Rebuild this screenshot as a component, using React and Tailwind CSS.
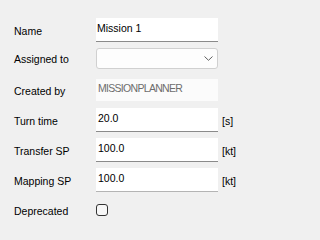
import React from 'react'

const font = { fontFamily: '"Liberation Sans", Arial, sans-serif' }

function Label({ children }) {
  return <div className="w-[82px] shrink-0 mt-[2px] text-black">{children}</div>
}

function TextBox({ value, border = 'border-b-[#8a8a8a]', pad = 'pl-[2px]' }) {
  return (
    <div
      className={`w-[122px] h-[24px] bg-white border-b ${border} flex items-center pb-[3px] ${pad} text-black`}
    >
      {value}
    </div>
  )
}

function Unit({ children }) {
  return <div className="ml-[4px] mt-[2px] text-black">{children}</div>
}

export default function App() {
  return (
    <div
      className="w-full min-w-[283px] h-screen min-h-[219px] bg-[#f0f0f0] overflow-hidden text-[10.5px] leading-none pl-[14px] pt-[18px] flex flex-col"
      style={font}
    >
      {/* Name */}
      <div className="flex items-center h-[24px]">
        <Label>Name</Label>
        <TextBox value="Mission 1" pad="pl-[1px]" />
      </div>

      {/* Assigned to */}
      <div className="flex items-center h-[21px] mt-[6px]">
        <Label>Assigned to</Label>
        <div className="w-[122px] h-[21px] bg-[#fdfdfd] border border-[#d0d0d0] rounded-[3px] flex items-center justify-end pr-[4px]">
          <svg width="9" height="5" viewBox="0 0 9 5" fill="none" stroke="#606060" strokeWidth="1">
            <path d="M0.5 0.5 L4.5 4.3 L8.5 0.5" />
          </svg>
        </div>
      </div>

      {/* Created by */}
      <div className="flex items-center h-[22px] mt-[10px]">
        <Label>Created by</Label>
        <div className="w-[122px] h-[22px] bg-[#fbfbfb] flex items-center pl-[2px] pb-[3px] text-[#6d6d6d] tracking-[-0.7px]">
          MISSIONPLANNER
        </div>
      </div>

      {/* Turn time */}
      <div className="flex items-center h-[24px] mt-[7px]">
        <Label>Turn time</Label>
        <TextBox value="20.0" />
        <Unit>[s]</Unit>
      </div>

      {/* Transfer SP */}
      <div className="flex items-center h-[24px] mt-[6px]">
        <Label>Transfer SP</Label>
        <TextBox value="100.0" />
        <Unit>[kt]</Unit>
      </div>

      {/* Mapping SP */}
      <div className="flex items-center h-[24px] mt-[6px]">
        <Label>Mapping SP</Label>
        <TextBox value="100.0" border="border-b-[#b4b4b4]" />
        <Unit>[kt]</Unit>
      </div>

      {/* Deprecated */}
      <div className="flex items-center h-[12px] mt-[12px]">
        <Label>Deprecated</Label>
        <div className="w-[12px] h-[12px] border border-[#333333] rounded-[3px] bg-[#f7f7f7]" />
      </div>
    </div>
  )
}
